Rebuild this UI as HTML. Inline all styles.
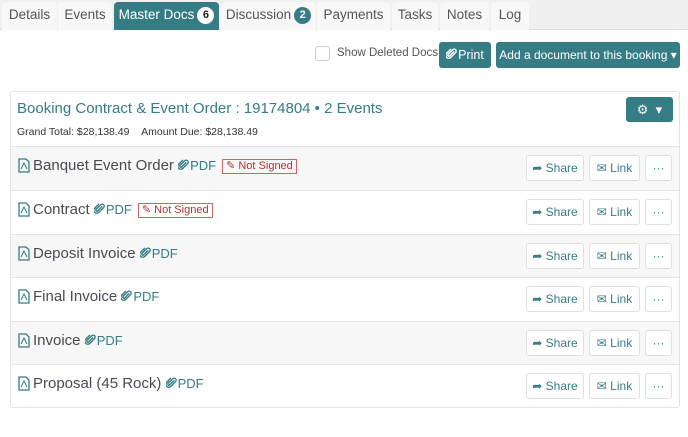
<!DOCTYPE html><html><head><style>
*{box-sizing:border-box;margin:0;padding:0}
body{width:688px;height:437px;background:#fff;font-family:"Liberation Sans",sans-serif;position:relative;overflow:hidden;color:#444}
.a{position:absolute}
.tabbar{left:0;top:0;width:688px;height:30px;background:#f0f0f0;border-bottom:1px solid #ddd}
.tab{position:absolute;top:2px;height:28px;background:#f8f8f8;border-radius:4px 4px 0 0;font-size:13.5px;color:#555;text-align:center;line-height:26px}
.tab.act{background:#367c85;color:#fff}
.badge{display:inline-block;width:17px;height:17px;border-radius:50%;font-size:11px;line-height:17px;font-weight:bold;vertical-align:1px;margin-left:3px}
.btn{position:absolute;background:#367c85;color:#fff;border-radius:3px;font-size:12.5px;text-align:center;line-height:26px;height:26px;white-space:nowrap}
.panel{left:10px;top:91px;width:670px;height:317px;border:1px solid #e3e3e3;border-radius:3px}
.row{position:absolute;left:0;width:668px;height:44px;border-top:1px solid #e6e6e6}
.row.g{background:#f7f7f7}
.t{position:absolute;left:22px;top:10px;font-size:15px;color:#4a4a55;white-space:nowrap}
.t .p{color:#367c85;font-size:13px}
.ns{display:inline-block;border:1px solid #c66;color:#a33;font-size:11px;padding:0 3px;line-height:13px;margin-left:6px;vertical-align:1px}
.ic{position:absolute;left:7px;top:11px}
.sb{position:absolute;top:8px;height:26px;background:#fff;border:1px solid #e0e0e0;border-radius:3px;color:#367c85;font-size:12px;text-align:center;line-height:24px}
.clip{display:inline-block;width:11px;height:12px;vertical-align:-1px;margin-right:1px}
</style></head><body>
<svg width="0" height="0" style="position:absolute"><symbol id="c" viewBox="0 0 12 12"><path d="M8.5 3.5L4 8a1.2 1.2 0 0 1-1.7-1.7L7.5 1.2a2.2 2.2 0 0 1 3.1 3.1L5 9.9a3.2 3.2 0 0 1-4.5-4.5L5 1" fill="none" stroke="currentColor" stroke-width="1.5" stroke-linecap="round"/></symbol></svg>
<div class="a tabbar"></div>
<div class="tab" style="left:2px;width:55px">Details</div>
<div class="tab" style="left:58px;width:54px">Events</div>
<div class="tab act" style="left:114px;width:105px">Master Docs<span class="badge" style="background:#fff;color:#222">6</span></div>
<div class="tab" style="left:221px;width:95px">Discussion<span class="badge" style="background:#367c85;color:#fff">2</span></div>
<div class="tab" style="left:317px;width:73px">Payments</div>
<div class="tab" style="left:392px;width:46px">Tasks</div>
<div class="tab" style="left:440px;width:49px">Notes</div>
<div class="tab" style="left:491px;width:38px">Log</div>
<div class="a" style="left:315px;top:46px;width:15px;height:15px;border:1px solid #ccc;border-radius:3px"></div>
<div class="a" style="left:337px;top:47px;font-size:11.5px;color:#555;white-space:nowrap">Show Deleted Docs</div>
<div class="btn" style="left:439px;top:42px;width:52px"><svg class="clip"><use href="#c"/></svg>Print</div>
<div class="btn" style="left:496px;top:42px;width:184px;font-size:12px">Add a document to this booking ▾</div>
<div class="a panel">
<div class="a" style="left:6px;top:8px;font-size:15px;color:#367c85;white-space:nowrap">Booking Contract &amp; Event Order : 19174804 • 2 Events</div>
<div class="a" style="left:6px;top:34px;font-size:10.5px;color:#333;white-space:nowrap">Grand Total: $28,138.49 &nbsp;&nbsp;&nbsp;Amount Due: $28,138.49</div>
<div class="btn" style="left:615px;top:5px;width:47px;height:25px;line-height:25px;font-size:13px">⚙ &nbsp;▾</div>
</div>
<div class="a" style="left:11px;top:146px">
 <div class="row g" style="top:0"><svg class="ic" width="12" height="15" viewBox="0 0 12 15"><path d="M1 1h7l3 3v10H1z" fill="none" stroke="#367c85" stroke-width="1.3"/><path d="M3 11l3-6 3 6" fill="none" stroke="#367c85"/></svg><div class="t">Banquet Event Order <span class="p"><svg class="clip"><use href="#c"/></svg>PDF</span><span class="ns">✎ Not Signed</span></div><div class="sb" style="left:515px;width:58px">➦ Share</div><div class="sb" style="left:578px;width:51px">✉ Link</div><div class="sb" style="left:634px;width:27px">···</div></div>
 <div class="row" style="top:44px"><svg class="ic" width="12" height="15" viewBox="0 0 12 15"><path d="M1 1h7l3 3v10H1z" fill="none" stroke="#367c85" stroke-width="1.3"/><path d="M3 11l3-6 3 6" fill="none" stroke="#367c85"/></svg><div class="t">Contract <span class="p"><svg class="clip"><use href="#c"/></svg>PDF</span><span class="ns">✎ Not Signed</span></div><div class="sb" style="left:515px;width:58px">➦ Share</div><div class="sb" style="left:578px;width:51px">✉ Link</div><div class="sb" style="left:634px;width:27px">···</div></div>
 <div class="row g" style="top:88px"><svg class="ic" width="12" height="15" viewBox="0 0 12 15"><path d="M1 1h7l3 3v10H1z" fill="none" stroke="#367c85" stroke-width="1.3"/><path d="M3 11l3-6 3 6" fill="none" stroke="#367c85"/></svg><div class="t">Deposit Invoice <span class="p"><svg class="clip"><use href="#c"/></svg>PDF</span></div><div class="sb" style="left:515px;width:58px">➦ Share</div><div class="sb" style="left:578px;width:51px">✉ Link</div><div class="sb" style="left:634px;width:27px">···</div></div>
 <div class="row" style="top:131px"><svg class="ic" width="12" height="15" viewBox="0 0 12 15"><path d="M1 1h7l3 3v10H1z" fill="none" stroke="#367c85" stroke-width="1.3"/><path d="M3 11l3-6 3 6" fill="none" stroke="#367c85"/></svg><div class="t">Final Invoice <span class="p"><svg class="clip"><use href="#c"/></svg>PDF</span></div><div class="sb" style="left:515px;width:58px">➦ Share</div><div class="sb" style="left:578px;width:51px">✉ Link</div><div class="sb" style="left:634px;width:27px">···</div></div>
 <div class="row g" style="top:175px"><svg class="ic" width="12" height="15" viewBox="0 0 12 15"><path d="M1 1h7l3 3v10H1z" fill="none" stroke="#367c85" stroke-width="1.3"/><path d="M3 11l3-6 3 6" fill="none" stroke="#367c85"/></svg><div class="t">Invoice <span class="p"><svg class="clip"><use href="#c"/></svg>PDF</span></div><div class="sb" style="left:515px;width:58px">➦ Share</div><div class="sb" style="left:578px;width:51px">✉ Link</div><div class="sb" style="left:634px;width:27px">···</div></div>
 <div class="row" style="top:218px"><svg class="ic" width="12" height="15" viewBox="0 0 12 15"><path d="M1 1h7l3 3v10H1z" fill="none" stroke="#367c85" stroke-width="1.3"/><path d="M3 11l3-6 3 6" fill="none" stroke="#367c85"/></svg><div class="t">Proposal (45 Rock) <span class="p"><svg class="clip"><use href="#c"/></svg>PDF</span></div><div class="sb" style="left:515px;width:58px">➦ Share</div><div class="sb" style="left:578px;width:51px">✉ Link</div><div class="sb" style="left:634px;width:27px">···</div></div>
</div>
</body></html>
